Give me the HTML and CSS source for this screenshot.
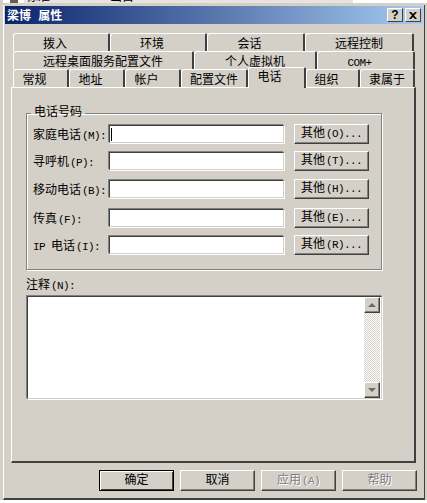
FILE: index.html
```html
<!DOCTYPE html>
<html lang="zh-CN">
<head>
    <meta charset="UTF-8">
    <title>梁博 属性</title>
    <link rel="stylesheet" href="styles.css">
</head>
<body>
    <div class="behind">
        <div class="behind-row">
            <span class="behind-icon"></span>
            <div class="behind-sel">
                <span class="behind-name">标准</span>
                <span class="behind-desc">出目</span>
            </div>
        </div>
    </div>

    <div class="window">
        <div class="titlebar">
            <span class="title">梁博 属性</span>
            <button class="title-btn title-help">?</button>
            <button class="title-btn title-close">
                <svg width="8" height="7" viewBox="0 0 8 7"><path d="M0 0h2l2 2 2-2h2L5 3.5 8 7H6L4 5 2 7H0l3-3.5z" fill="#000"/></svg>
            </button>
        </div>

        <div class="tabs">
            <div class="tab-row">
                <div class="tab tab-short w97">拨入</div>
                <div class="tab tab-short w97">环境</div>
                <div class="tab tab-short w98">会话</div>
                <div class="tab w109">远程控制</div>
            </div>
            <div class="tab-row">
                <div class="tab w181">远程桌面服务配置文件</div>
                <div class="tab w123">个人虚拟机</div>
                <div class="tab tab-short tab-com w98">COM+</div>
            </div>
            <div class="tab-row">
                <div class="tab tab-short w56">常规</div>
                <div class="tab tab-short w56">地址</div>
                <div class="tab tab-short w56">帐户</div>
                <div class="tab w67">配置文件</div>
                <div class="tab tab-short tab-active">电话</div>
                <div class="tab tab-short w54">组织</div>
                <div class="tab w55">隶属于</div>
            </div>
        </div>

        <div class="panel">
            <fieldset class="group">
                <legend>电话号码</legend>
                <div class="phone-row">
                    <label>家庭电话<span class="key">(M):</span></label>
                    <div class="field"><span class="caret"></span></div>
                    <button class="btn">其他<span class="key">(O)...</span></button>
                </div>
                <div class="phone-row">
                    <label>寻呼机<span class="key">(P):</span></label>
                    <div class="field"></div>
                    <button class="btn">其他<span class="key">(T)...</span></button>
                </div>
                <div class="phone-row">
                    <label>移动电话<span class="key">(B):</span></label>
                    <div class="field"></div>
                    <button class="btn">其他<span class="key">(H)...</span></button>
                </div>
                <div class="phone-row">
                    <label>传真<span class="key">(F):</span></label>
                    <div class="field"></div>
                    <button class="btn">其他<span class="key">(E)...</span></button>
                </div>
                <div class="phone-row">
                    <label><span class="latin">IP </span>电话<span class="key">(I):</span></label>
                    <div class="field"></div>
                    <button class="btn">其他<span class="key">(R)...</span></button>
                </div>
            </fieldset>

            <div class="notes-label">注释<span class="key">(N):</span></div>
            <div class="notes">
                <div class="scrollbar">
                    <div class="scroll-btn"><span class="arrow-up"></span></div>
                    <div class="scroll-track"></div>
                    <div class="scroll-btn"><span class="arrow-down"></span></div>
                </div>
            </div>
        </div>

        <div class="actions">
            <button class="btn btn-default">确定</button>
            <button class="btn">取消</button>
            <button class="btn btn-disabled">应用<span class="key">(A)</span></button>
            <button class="btn btn-disabled">帮助</button>
        </div>
    </div>
    <div class="below"></div>
</body>
</html>
```

FILE: styles.css
```css
html, body {
    margin: 0;
    padding: 0;
}
body {
    width: 427px;
    height: 503px;
    overflow: hidden;
    background: #d4d0c8;
    color: #000;
    font-family: "Liberation Mono", "Noto Sans CJK SC", monospace;
    font-size: 12px;
}
button {
    font: inherit;
    color: inherit;
    padding: 0;
    margin: 0;
}
/* latin letters are half the width of a CJK glyph */
.key, .latin, .tab-com {
    font-size: 11px;
    letter-spacing: -0.6px;
}
.key {
    margin-left: 1px;
}

/* the list behind the dialog, only its last pixels show */
.behind {
    height: 5px;
    overflow: hidden;
}
.behind-row {
    height: 3px;
    margin-left: 3px;
    overflow: hidden;
    display: flex;
    background: #fff;
    line-height: 12px;
}
.behind-icon {
    width: 8px;
    height: 3px;
    margin-left: 7px;
    margin-right: 6px;
    background: #6b5a50;
    flex: none;
}
.behind-sel {
    width: 329px;
    flex: none;
    display: flex;
    align-items: flex-end;
    background: #e6e4de;
}
.behind-name {
    margin-left: 2px;
    width: 84px;
    flex: none;
    margin-bottom: -1px;
}
.behind-desc {
    margin-bottom: -1px;
}

.window {
    box-sizing: border-box;
    width: 422px;
    height: 495px;
    margin-left: 3px;
    padding: 1px 1px 0 1px;
    background: #d4d0c8;
    border-left: 1px solid #fff;
    border-right: 1px solid #404040;
    border-bottom: 2px solid #404040;
}
.below {
    height: 3px;
    background: #fff;
}

.titlebar {
    display: flex;
    align-items: center;
    height: 18px;
    padding: 0 2px;
    background: linear-gradient(to right, #0a246a, #a6caf0);
}
.title {
    flex: 1;
    color: #fff;
    font-weight: bold;
}
.title-btn {
    box-sizing: border-box;
    width: 16px;
    height: 14px;
    background: #d4d0c8;
    border: 1px solid;
    border-color: #fff #404040 #404040 #fff;
    display: flex;
    align-items: center;
    justify-content: center;
    font-family: "Liberation Sans", sans-serif;
    font-weight: bold;
    line-height: 12px;
}
.title-help {
    margin-right: 2px;
}

/* tabs */
.tabs {
    margin-top: 9px;
    margin-left: 8px;
    width: 403px;
}
.tab-row {
    display: flex;
    height: 18px;
    align-items: flex-end;
}
.tab {
    box-sizing: border-box;
    height: 18px;
    flex: none;
    padding-top: 1px;
    text-align: center;
    line-height: 20px;
    white-space: nowrap;
    background: #d4d0c8;
    border-top: 1px solid #fff;
    border-left: 1px solid #fff;
    border-right: 2px solid #404040;
    border-top-left-radius: 3px;
    border-top-right-radius: 2px;
}
/* short captions sit left of the tab's middle */
.tab-short {
    padding-right: 12px;
}
.w54 { width: 54px; }
.w55 { width: 55px; }
.w56 { width: 56px; }
.w67 { width: 67px; }
.w97 { width: 97px; }
.w98 { width: 98px; }
.w109 { width: 109px; }
.w123 { width: 123px; }
.w181 { width: 181px; }
.tab-active {
    position: relative;
    z-index: 1;
    width: 58px;
    height: 21px;
    margin-bottom: -1px;
    padding-top: 0;
    padding-right: 14px;
    line-height: 21px;
}

/* property page */
.panel {
    box-sizing: border-box;
    width: 405px;
    height: 376px;
    margin-left: 6px;
    padding: 18px 0 0 14px;
    border-top: 1px solid #fff;
    border-left: 1px solid #fff;
    border-right: 2px solid #404040;
    border-bottom: 2px solid #404040;
}
.group {
    box-sizing: border-box;
    width: 356px;
    height: 164px;
    margin: 0;
    padding: 4px 0 0 6px;
    border: 1px solid #808080;
    box-shadow: 1px 1px 0 #fff, inset 1px 1px 0 #fff;
}
.group legend {
    padding: 0 3px;
    margin-left: -2px;
    line-height: 14px;
}
.phone-row {
    display: flex;
    align-items: center;
    height: 20px;
    margin-bottom: 7px;
}
.phone-row:nth-of-type(2) { margin-bottom: 8px; }
.phone-row:nth-of-type(3) { margin-bottom: 9px; }
.phone-row label {
    width: 76px;
    flex: none;
    white-space: nowrap;
}
.field {
    box-sizing: border-box;
    width: 175px;
    height: 18px;
    flex: none;
    display: flex;
    align-items: center;
    padding-left: 1px;
    background: #fff;
    border: 1px solid;
    border-color: #404040 #d4d0c8 #d4d0c8 #404040;
    box-shadow: -1px -1px 0 #808080, 1px 1px 0 #fff;
}
.caret {
    width: 1px;
    height: 13px;
    background: #000;
}
.btn {
    box-sizing: border-box;
    width: 75px;
    height: 20px;
    flex: none;
    background: #d4d0c8;
    border: 1px solid;
    border-color: #fff #404040 #404040 #fff;
    box-shadow: inset -1px -1px 0 #808080;
    white-space: nowrap;
    line-height: 16px;
}
.phone-row .btn {
    margin-left: 10px;
}

/* notes box */
.notes-label {
    margin-top: 9px;
    line-height: 14px;
}
.notes {
    box-sizing: border-box;
    width: 355px;
    height: 103px;
    margin: 3px 0 0 1px;
    padding-right: 1px;
    display: flex;
    justify-content: flex-end;
    background: #fff;
    border: 1px solid;
    border-color: #404040 #d4d0c8 #d4d0c8 #404040;
    box-shadow: -1px -1px 0 #808080, 1px 1px 0 #fff;
}
.scrollbar {
    width: 16px;
    display: flex;
    flex-direction: column;
}
.scroll-btn {
    box-sizing: border-box;
    height: 16px;
    flex: none;
    display: flex;
    align-items: center;
    justify-content: center;
    background: #d4d0c8;
    border: 1px solid;
    border-color: #fff #404040 #404040 #fff;
    box-shadow: inset -1px -1px 0 #808080;
}
.scroll-track {
    flex: 1;
    background-color: #fff;
    background-image: repeating-conic-gradient(#d4d0c8 0 25%, #fff 0 50%);
    background-size: 2px 2px;
}
.arrow-up {
    width: 0;
    height: 0;
    border-left: 4px solid transparent;
    border-right: 4px solid transparent;
    border-bottom: 4px solid #6e6a62;
}
.arrow-down {
    width: 0;
    height: 0;
    border-left: 4px solid transparent;
    border-right: 4px solid transparent;
    border-top: 4px solid #6e6a62;
}

/* dialog buttons */
.actions {
    display: flex;
    justify-content: flex-end;
    gap: 6px;
    margin-top: 7px;
    margin-right: 6px;
}
.actions .btn {
    height: 21px;
}
.btn-default {
    border-color: #000;
    box-shadow: inset 1px 1px 0 #fff, inset -1px -1px 0 #404040;
}
.btn-disabled {
    color: #808080;
    text-shadow: 1px 1px 0 #fff;
}
```
